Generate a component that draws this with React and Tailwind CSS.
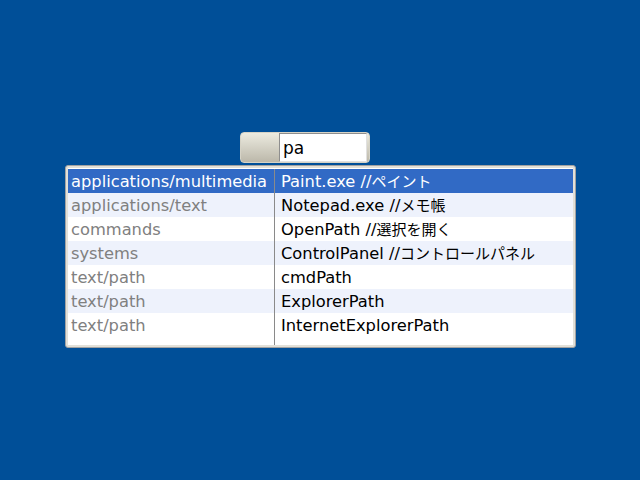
import React from "react";

const rows = [
  ["applications/multimedia", "Paint.exe //", "ペイント"],
  ["applications/text", "Notepad.exe //", "メモ帳"],
  ["commands", "OpenPath //", "選択を開く"],
  ["systems", "ControlPanel //", "コントロールパネル"],
  ["text/path", "cmdPath", ""],
  ["text/path", "ExplorerPath", ""],
  ["text/path", "InternetExplorerPath", ""],
];

const font = { fontFamily: '"DejaVu Sans", "Noto Sans CJK JP", sans-serif' };

function rowBg(i) {
  if (i === 0) return "bg-[#316ac5]";
  return i % 2 === 1 ? "bg-[#eef2fc]" : "bg-white";
}

export default function App() {
  return (
    <div className="w-[640px] h-[480px] bg-[#004f98] pt-[132px] flex flex-col" style={font}>
      <div className="ml-[240px] w-[130px] h-[31px] rounded-[4px] border border-[#d6d3c6] bg-gradient-to-b from-[#ecebe0] to-[#bcb8aa] flex items-start justify-end pr-[2px] pt-0">
        <div className="w-[88px] h-[29px] bg-white border-l border-t border-[#8e8e8e] border-r border-r-[#e0e0e0] border-b border-b-[#e0e0e0] pl-[3px] text-[17px] leading-[28px] text-black">
          pa
        </div>
      </div>
      <div className="ml-[65px] mt-[2px] w-[511px] h-[183px] rounded-[3px] border border-[#a2a2a2] bg-[#e2e0d8] p-[2px]">
        <div className="w-full h-full bg-white pt-[1px] flex text-[16.3px] leading-[25px]">
          <div className="w-[207px] border-r border-[#8a8a8a] flex flex-col">
            {rows.map((r, i) => (
              <div
                key={i}
                className={`h-[24px] overflow-hidden pl-[3px] whitespace-nowrap ${rowBg(i)} ${i === 0 ? "text-white" : "text-[#808080]"}`}
              >
                {r[0]}
              </div>
            ))}
          </div>
          <div className="flex-1 flex flex-col">
            {rows.map((r, i) => (
              <div
                key={i}
                className={`h-[24px] overflow-hidden pl-[6px] whitespace-nowrap ${rowBg(i)} ${i === 0 ? "text-white" : "text-black"}`}
              >
                {r[1]}
                {r[2] && <span className="text-[15px]">{r[2]}</span>}
              </div>
            ))}
          </div>
        </div>
      </div>
    </div>
  );
}
